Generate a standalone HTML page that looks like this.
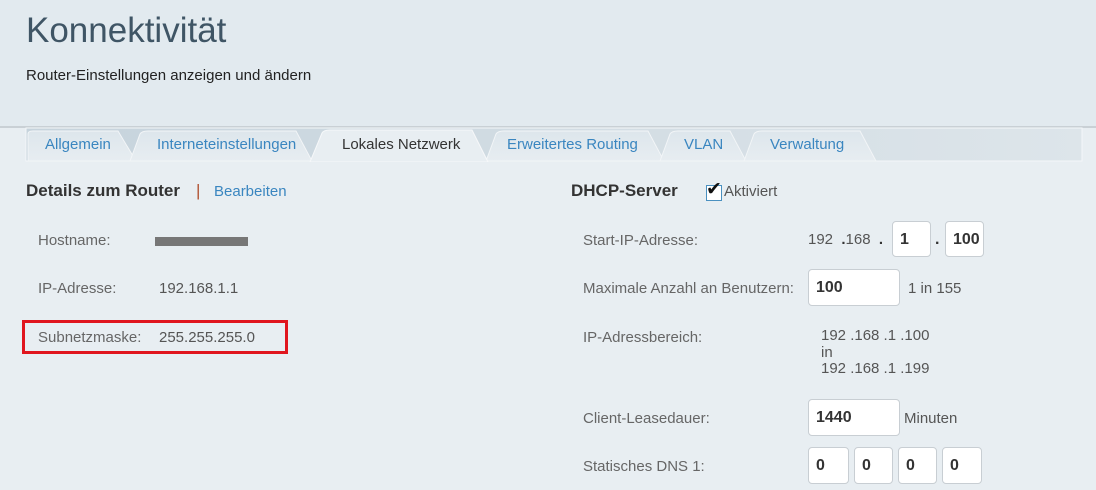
<!DOCTYPE html>
<html><head><meta charset="utf-8"><style>
body{margin:0;width:1096px;height:490px;overflow:hidden;background:#e8eef2;font-family:"Liberation Sans",Arial,sans-serif;position:relative}
.a{position:absolute;white-space:nowrap}
.lbl{color:#666;font-size:15px}
.val{color:#555;font-size:15px}
.in{position:absolute;background:#fff;border:1px solid #c8ced3;border-radius:4px;box-sizing:border-box;font-weight:bold;font-size:16px;color:#333;padding:9px 0 0 7px}
</style></head><body>
<div class="a" style="left:0;top:0;width:1096px;height:126px;background:#e2eaef"></div>
<div class="a" style="left:0;top:126px;width:1096px;height:2px;background:#c9d0d5"></div>
<div class="a" style="left:26px;top:11px;font-size:35px;color:#3f5565">Konnektivität</div>
<div class="a" style="left:26px;top:67px;font-size:15px;color:#222">Router-Einstellungen anzeigen und ändern</div>
<svg class="a" style="left:0;top:126px" width="1096" height="36">
<defs><linearGradient id="g" x1="0" y1="0" x2="1" y2="0"><stop offset="0" stop-color="#c6d3dc"/><stop offset="1" stop-color="#dde5ea"/></linearGradient>
<linearGradient id="t" x1="0" y1="0" x2="0" y2="1"><stop offset="0" stop-color="#dde6ec"/><stop offset="1" stop-color="#e7edf1"/></linearGradient></defs>
<rect x="26" y="2" width="1056" height="33" fill="url(#g)" stroke="#f4f7f9"/>
<path d="M28 35 L28 8 Q28 5 33 5 L118 5 L136 35Z" fill="url(#t)" stroke="#f2f5f7"/>
<path d="M130 35 L140 8 Q142 5 148 5 L296 5 L312 35Z" fill="url(#t)" stroke="#f2f5f7"/>
<path d="M486 35 L496 8 Q498 5 504 5 L648 5 L664 35Z" fill="url(#t)" stroke="#f2f5f7"/>
<path d="M660 35 L670 8 Q672 5 678 5 L730 5 L746 35Z" fill="url(#t)" stroke="#f2f5f7"/>
<path d="M744 35 L754 8 Q756 5 762 5 L860 5 L876 35Z" fill="url(#t)" stroke="#f2f5f7"/>
<path d="M310 36 L322 7 Q324 4 330 4 L472 4 L488 36Z" fill="#e8eef2" stroke="#f6f8fa"/>
</svg>
<div class="a" style="left:45px;top:136px;font-size:15px;color:#3a86c0">Allgemein</div>
<div class="a" style="left:157px;top:136px;font-size:15px;color:#3a86c0">Interneteinstellungen</div>
<div class="a" style="left:342px;top:136px;font-size:15px;color:#333">Lokales Netzwerk</div>
<div class="a" style="left:507px;top:136px;font-size:15px;color:#3a86c0">Erweitertes Routing</div>
<div class="a" style="left:684px;top:136px;font-size:15px;color:#3a86c0">VLAN</div>
<div class="a" style="left:770px;top:136px;font-size:15px;color:#3a86c0">Verwaltung</div>

<div class="a" style="left:26px;top:181px;font-size:17px;font-weight:bold;color:#333">Details zum Router</div>
<div class="a" style="left:196px;top:181px;font-size:17px;color:#b05030">|</div>
<div class="a" style="left:214px;top:183px;font-size:15px;color:#3a86c0">Bearbeiten</div>
<div class="a lbl" style="left:38px;top:232px">Hostname:</div>
<div class="a" style="left:155px;top:237px;width:93px;height:9px;background:#777"></div>
<div class="a lbl" style="left:38px;top:280px">IP-Adresse:</div>
<div class="a val" style="left:159px;top:280px">192.168.1.1</div>
<div class="a lbl" style="left:38px;top:329px">Subnetzmaske:</div>
<div class="a val" style="left:159px;top:329px">255.255.255.0</div>
<div class="a" style="left:22px;top:320px;width:260px;height:28px;border:3px solid #e0161e"></div>

<div class="a" style="left:571px;top:181px;font-size:17px;font-weight:bold;color:#333">DHCP-Server</div>
<div class="a" style="left:706px;top:185px;width:14px;height:14px;background:#fff;border:1px solid #4a90c0"></div>
<div class="a" style="left:706px;top:178px;font-size:19px;color:#111">✔</div>
<div class="a lbl" style="left:724px;top:183px;color:#555">Aktiviert</div>
<div class="a lbl" style="left:583px;top:232px">Start-IP-Adresse:</div>
<div class="a val" style="left:808px;top:231px">192 &nbsp;<b style="color:#333">.</b>168 &nbsp;<b style="color:#333">.</b></div>
<div class="in" style="left:892px;top:221px;width:39px;height:36px">1</div>
<div class="a" style="left:935px;top:231px;color:#333;font-weight:bold">.</div>
<div class="in" style="left:945px;top:221px;width:39px;height:36px">100</div>
<div class="a lbl" style="left:583px;top:280px">Maximale Anzahl an Benutzern:</div>
<div class="in" style="left:808px;top:269px;width:92px;height:37px">100</div>
<div class="a val" style="left:908px;top:280px">1 in 155</div>
<div class="a lbl" style="left:583px;top:329px">IP-Adressbereich:</div>
<div class="a" style="left:821px;top:328px;font-size:15px;color:#555;line-height:16.5px">192 .168 .1 .100<br>in<br>192 .168 .1 .199</div>
<div class="a lbl" style="left:583px;top:410px">Client-Leasedauer:</div>
<div class="in" style="left:808px;top:399px;width:92px;height:37px">1440</div>
<div class="a val" style="left:904px;top:410px">Minuten</div>
<div class="a lbl" style="left:583px;top:458px">Statisches DNS 1:</div>
<div class="in" style="left:808px;top:447px;width:41px;height:37px">0</div>
<div class="in" style="left:854px;top:447px;width:39px;height:37px">0</div>
<div class="in" style="left:898px;top:447px;width:39px;height:37px">0</div>
<div class="in" style="left:942px;top:447px;width:40px;height:37px">0</div>
</body></html>
